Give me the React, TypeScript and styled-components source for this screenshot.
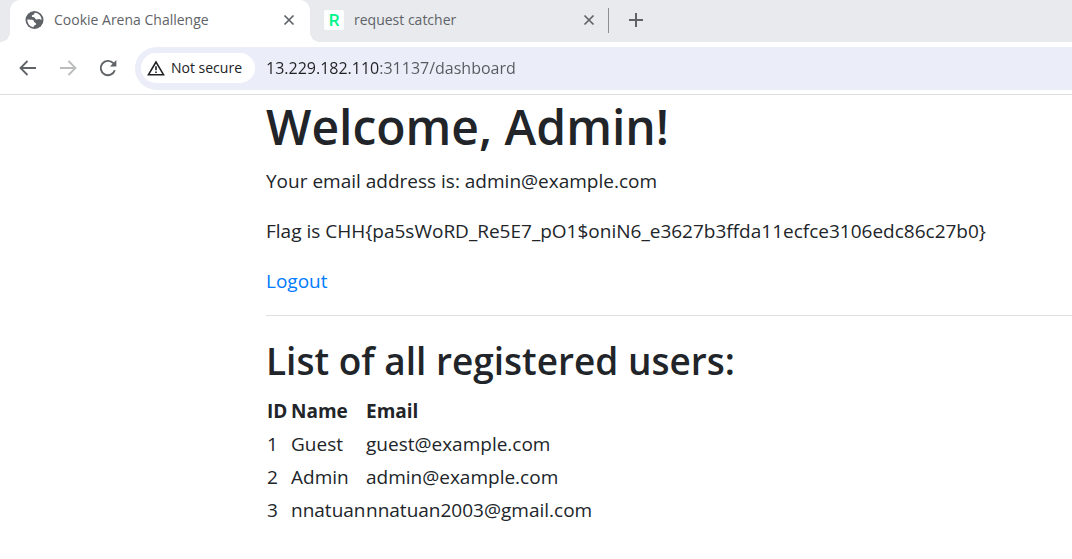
import React from "react";
import styled, { createGlobalStyle } from "styled-components";

const GlobalStyle = createGlobalStyle`
  *, *::before, *::after { box-sizing: border-box; }
  body {
    margin: 0;
    background: #fff;
    color: #212529;
    font-family: "Open Sans", "Noto Sans", sans-serif;
    font-size: 19px;
    line-height: 32px;
  }
  button { margin: 0; padding: 0; border: 0; background: none; color: inherit; font: inherit; }
`;

const TabStrip = styled.header`
  display: flex;
  height: 42px;
  padding-left: 10px;
  background: #e8eaed;
`;

const Tab = styled.div<{ $active?: boolean }>`
  position: relative;
  display: flex;
  align-items: center;
  width: 300px;
  padding: 0 15px 2px 14px;
  border-radius: 10px 10px 0 0;
  background: ${(p) => (p.$active ? "#fff" : "transparent")};
  color: #5f6368;

  &::before, &::after {
    content: "";
    display: ${(p) => (p.$active ? "block" : "none")};
    position: absolute;
    bottom: 0;
    width: 10px;
    height: 10px;
  }
  &::before { right: 100%; background: radial-gradient(circle at 0 0, transparent 10px, #fff 10px); }
  &::after { left: 100%; background: radial-gradient(circle at 100% 0, transparent 10px, #fff 10px); }
`;

const TabLabel = styled.button`
  display: flex;
  flex: 1;
  align-items: center;
  gap: 10px;
  font-size: 14px;
  line-height: 20px;
  white-space: nowrap;
`;

const Favicon = styled.span`
  display: grid;
  place-items: center;
  width: 20px;
  height: 20px;
  border-radius: 2px;
  background: #fff;
  color: #00f58a;
  font: 500 17px/20px Roboto, sans-serif;
`;

const IconButton = styled.button<{ $faded?: boolean }>`
  display: grid;
  place-items: center;
  flex: none;
  color: ${(p) => (p.$faded ? "#babcbe" : "#5f6368")};
  svg { display: block; }
`;

const NewTab = styled(IconButton)`
  width: 54px;
  height: 40px;
`;

const TabDivider = styled.span`
  width: 1px;
  height: 25px;
  margin: 8px 0 0 -2px;
  background: #8a8d91;
`;

const Toolbar = styled.nav`
  display: flex;
  align-items: center;
  gap: 20px;
  height: 53px;
  padding: 0 0 0 18px;
  border-bottom: 1px solid #dcdde0;
`;

const AddressBar = styled.div`
  display: flex;
  flex: 1;
  align-items: center;
  gap: 11px;
  min-width: 0;
  height: 43px;
  margin-left: -3px;
  padding-left: 6px;
  border-radius: 22px 0 0 22px;
  background: #ebeef8;
`;

const SecurityChip = styled.button`
  display: flex;
  flex: none;
  align-items: center;
  gap: 6px;
  width: 114px;
  height: 30px;
  padding-left: 6px;
  border-radius: 15px;
  background: #fff;
  color: #202124;
  font-size: 14px;
  font-weight: 500;
  white-space: nowrap;
`;

const AddressInput = styled.input`
  flex: 1;
  min-width: 0;
  height: 32px;
  padding: 0;
  border: 0;
  outline: 0;
  background: linear-gradient(90deg, #202124 113px, #55585d 113px);
  background-clip: text;
  color: transparent;
  font: 16px/32px "Open Sans", "Noto Sans", sans-serif;
`;

const Page = styled.main`
  padding: 0 0 32px 266px;
`;

const Title = styled.h1`
  margin: 0 0 6px;
  font-size: 48px;
  font-weight: 600;
  line-height: 64px;
`;

const Subtitle = styled.h2`
  margin: 0 0 9px;
  font-size: 37px;
  font-weight: 600;
  line-height: 48px;
`;

const Paragraph = styled.p`
  margin: 0 0 18px;
`;

const Link = styled.a`
  color: #007bff;
  text-decoration: none;
`;

const Rule = styled.hr`
  margin: 0 0 21px;
  border: 0;
  border-top: 1px solid #e0e0e0;
`;

const UserTable = styled.table`
  width: 480px;
  table-layout: fixed;
  border-collapse: collapse;
  line-height: 30px;
  th, td { height: 33px; padding: 1px; text-align: left; white-space: nowrap; }
`;

const Column = styled.col<{ $width?: number }>`
  width: ${(p) => (p.$width ? `${p.$width}px` : "auto")};
`;

const CloseIcon = () => (
  <svg width="12" height="12" viewBox="0 0 12 12" fill="none" stroke="currentColor" strokeWidth="1.7">
    <path d="M1.5 1.5l9 9M10.5 1.5l-9 9" />
  </svg>
);

const GlobeIcon = () => (
  <svg width="20" height="20" viewBox="0 0 20 20">
    <circle cx="10.5" cy="10" r="9" fill="#5f6368" />
    <path
      fill="#fff"
      d="M10.700 2.700c-.6 1-.2 1.700-1.300 2.100-1 .4-1.700.5-1.600 1.500.1.900 1 .8 1.900.9 1.500.1 1.300 1.900 2.500 2.300 1 .3 1.900-.5 3-.4 1 .1 1.700.7 2.500.9a7.300 7.300 0 0 0-7-7.300zM3.300 9.400c2 .2 4.600-.1 6 .8 1.200.8.600 2.100 1.700 2.600.9.500 1.500.7 1 1.800-.5 1-1.800.6-2.200 1.500-.2.500-.1.900 0 1.200a7.400 7.400 0 0 1-6.500-7.900z"
    />
  </svg>
);

const ArrowIcon = ({ forward }: { forward?: boolean }) => (
  <svg width="20" height="20" viewBox="0 0 20 20" fill="none" stroke="currentColor" strokeWidth="1.8">
    <path d={forward ? "M2 10h15M10.5 3l7 7-7 7" : "M18 10H3M9.5 3l-7 7 7 7"} />
  </svg>
);

const ReloadIcon = () => (
  <svg width="20" height="20" viewBox="0 0 20 20" fill="none" stroke="currentColor" strokeWidth="1.9">
    <path d="M16.8 12.3A7.2 7.2 0 1 1 15.3 5.2L17 7" />
    <path d="M18.4 2v6.500h-6.500z" fill="currentColor" stroke="none" />
  </svg>
);

const WarningIcon = () => (
  <svg width="18" height="18" viewBox="0 0 18 18" fill="none" stroke="#202124" strokeWidth="1.6">
    <path d="M9 3L1.500 15.700h15z" />
    <path d="M9 7.300v3.900M9 12.400V14" />
  </svg>
);

const PlusIcon = () => (
  <svg width="16" height="16" viewBox="0 0 16 16" fill="none" stroke="currentColor" strokeWidth="2">
    <path d="M8 1v14M1 8h14" />
  </svg>
);

const users = [
  { id: 1, name: "Guest", email: "guest@example.com" },
  { id: 2, name: "Admin", email: "admin@example.com" },
  { id: 3, name: "nnatuan", email: "nnatuan2003@gmail.com" },
];

export default function App() {
  return (
    <>
      <GlobalStyle />
      <TabStrip>
        <Tab $active>
          <TabLabel><GlobeIcon />Cookie Arena Challenge</TabLabel>
          <IconButton aria-label="Close Cookie Arena Challenge"><CloseIcon /></IconButton>
        </Tab>
        <Tab>
          <TabLabel><Favicon aria-hidden="true">R</Favicon>request catcher</TabLabel>
          <IconButton aria-label="Close request catcher"><CloseIcon /></IconButton>
        </Tab>
        <TabDivider />
        <NewTab aria-label="New tab"><PlusIcon /></NewTab>
      </TabStrip>
      <Toolbar>
        <IconButton aria-label="Back"><ArrowIcon /></IconButton>
        <IconButton aria-label="Forward" $faded><ArrowIcon forward /></IconButton>
        <IconButton aria-label="Reload"><ReloadIcon /></IconButton>
        <AddressBar>
          <SecurityChip><WarningIcon />Not secure</SecurityChip>
          <AddressInput aria-label="Address" defaultValue="13.229.182.110:31137/dashboard" spellCheck={false} />
        </AddressBar>
      </Toolbar>
      <Page>
        <Title>Welcome, Admin!</Title>
        <Paragraph>Your email address is: admin@example.com</Paragraph>
        <Paragraph>{"Flag is CHH{pa5sWoRD_Re5E7_pO1$oniN6_e3627b3ffda11ecfce3106edc86c27b0}"}</Paragraph>
        <Paragraph><Link href="#logout">Logout</Link></Paragraph>
        <Rule />
        <Subtitle>List of all registered users:</Subtitle>
        <UserTable>
          <colgroup>
            <Column $width={24} />
            <Column $width={75} />
            <Column />
          </colgroup>
          <thead>
            <tr><th>ID</th><th>Name</th><th>Email</th></tr>
          </thead>
          <tbody>
            {users.map((user) => (
              <tr key={user.id}><td>{user.id}</td><td>{user.name}</td><td>{user.email}</td></tr>
            ))}
          </tbody>
        </UserTable>
      </Page>
    </>
  );
}
